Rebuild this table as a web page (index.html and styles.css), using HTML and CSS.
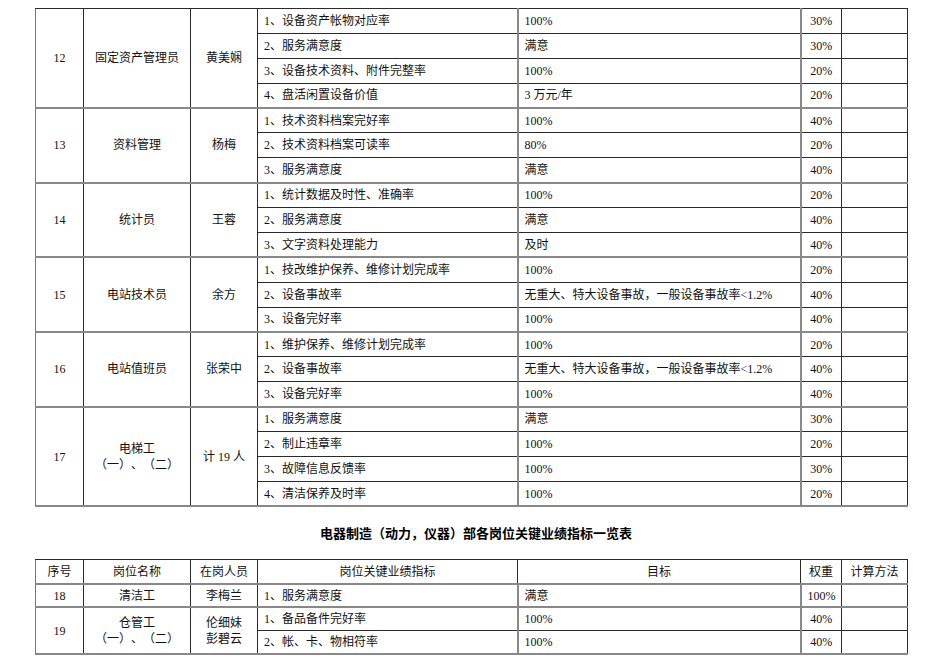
FILE: index.html
```html
<!DOCTYPE html>
<html lang="zh-CN">
<head>
<meta charset="utf-8">
<title>岗位关键业绩指标一览表</title>
<link rel="stylesheet" href="styles.css">
</head>
<body>
<div class="page">
  <table class="kpi kpi-main">
    <colgroup>
      <col class="c-no"><col class="c-post"><col class="c-staff"><col class="c-kpi"><col class="c-goal"><col class="c-weight"><col class="c-calc">
    </colgroup>
    <tbody class="grp">
      <tr><td rowspan="4" class="ctr">12</td><td rowspan="4" class="ctr">固定资产管理员</td><td rowspan="4" class="ctr">黄美娴</td><td class="kpi-t">1、设备资产帐物对应率</td><td class="goal">100%</td><td class="ctr w">30%</td><td></td></tr>
      <tr><td class="kpi-t">2、服务满意度</td><td class="goal">满意</td><td class="ctr w">30%</td><td></td></tr>
      <tr><td class="kpi-t">3、设备技术资料、附件完整率</td><td class="goal">100%</td><td class="ctr w">20%</td><td></td></tr>
      <tr class="last"><td class="kpi-t">4、盘活闲置设备价值</td><td class="goal">3 万元/年</td><td class="ctr w">20%</td><td></td></tr>
    </tbody>
    <tbody class="grp">
      <tr><td rowspan="3" class="ctr">13</td><td rowspan="3" class="ctr">资料管理</td><td rowspan="3" class="ctr">杨梅</td><td class="kpi-t">1、技术资料档案完好率</td><td class="goal">100%</td><td class="ctr w">40%</td><td></td></tr>
      <tr><td class="kpi-t">2、技术资料档案可读率</td><td class="goal">80%</td><td class="ctr w">20%</td><td></td></tr>
      <tr class="last"><td class="kpi-t">3、服务满意度</td><td class="goal">满意</td><td class="ctr w">40%</td><td></td></tr>
    </tbody>
    <tbody class="grp">
      <tr><td rowspan="3" class="ctr">14</td><td rowspan="3" class="ctr">统计员</td><td rowspan="3" class="ctr">王蓉</td><td class="kpi-t">1、统计数据及时性、准确率</td><td class="goal">100%</td><td class="ctr w">20%</td><td></td></tr>
      <tr><td class="kpi-t">2、服务满意度</td><td class="goal">满意</td><td class="ctr w">40%</td><td></td></tr>
      <tr class="last"><td class="kpi-t">3、文字资料处理能力</td><td class="goal">及时</td><td class="ctr w">40%</td><td></td></tr>
    </tbody>
    <tbody class="grp">
      <tr><td rowspan="3" class="ctr">15</td><td rowspan="3" class="ctr">电站技术员</td><td rowspan="3" class="ctr">余方</td><td class="kpi-t">1、技改维护保养、维修计划完成率</td><td class="goal">100%</td><td class="ctr w">20%</td><td></td></tr>
      <tr><td class="kpi-t">2、设备事故率</td><td class="goal">无重大、特大设备事故，一般设备事故率&lt;1.2%</td><td class="ctr w">40%</td><td></td></tr>
      <tr class="last"><td class="kpi-t">3、设备完好率</td><td class="goal">100%</td><td class="ctr w">40%</td><td></td></tr>
    </tbody>
    <tbody class="grp">
      <tr><td rowspan="3" class="ctr">16</td><td rowspan="3" class="ctr">电站值班员</td><td rowspan="3" class="ctr">张荣中</td><td class="kpi-t">1、维护保养、维修计划完成率</td><td class="goal">100%</td><td class="ctr w">20%</td><td></td></tr>
      <tr><td class="kpi-t">2、设备事故率</td><td class="goal">无重大、特大设备事故，一般设备事故率&lt;1.2%</td><td class="ctr w">40%</td><td></td></tr>
      <tr class="last"><td class="kpi-t">3、设备完好率</td><td class="goal">100%</td><td class="ctr w">40%</td><td></td></tr>
    </tbody>
    <tbody class="grp">
      <tr><td rowspan="4" class="ctr">17</td><td rowspan="4" class="ctr multi">电梯工<br>（一）、（二）</td><td rowspan="4" class="ctr">计 19 人</td><td class="kpi-t">1、服务满意度</td><td class="goal">满意</td><td class="ctr w">30%</td><td></td></tr>
      <tr><td class="kpi-t">2、制止违章率</td><td class="goal">100%</td><td class="ctr w">20%</td><td></td></tr>
      <tr><td class="kpi-t">3、故障信息反馈率</td><td class="goal">100%</td><td class="ctr w">30%</td><td></td></tr>
      <tr class="last"><td class="kpi-t">4、清洁保养及时率</td><td class="goal">100%</td><td class="ctr w">20%</td><td></td></tr>
    </tbody>
  </table>

  <h2 class="title">电器制造（动力，仪器）部各岗位关键业绩指标一览表</h2>

  <table class="kpi kpi-second">
    <colgroup>
      <col class="c-no"><col class="c-post"><col class="c-staff"><col class="c-kpi"><col class="c-goal"><col class="c-weight"><col class="c-calc">
    </colgroup>
    <thead>
      <tr class="head"><th>序号</th><th>岗位名称</th><th>在岗人员</th><th>岗位关键业绩指标</th><th>目标</th><th>权重</th><th>计算方法</th></tr>
    </thead>
    <tbody class="grp">
      <tr class="last"><td class="ctr">18</td><td class="ctr">清洁工</td><td class="ctr">李梅兰</td><td class="kpi-t">1、服务满意度</td><td class="goal">满意</td><td class="ctr w">100%</td><td></td></tr>
    </tbody>
    <tbody class="grp">
      <tr><td rowspan="2" class="ctr">19</td><td rowspan="2" class="ctr multi">仓管工<br>（一）、（二）</td><td rowspan="2" class="ctr multi">伦细妹<br>彭碧云</td><td class="kpi-t">1、备品备件完好率</td><td class="goal">100%</td><td class="ctr w">40%</td><td></td></tr>
      <tr class="last"><td class="kpi-t">2、帐、卡、物相符率</td><td class="goal">100%</td><td class="ctr w">40%</td><td></td></tr>
    </tbody>
  </table>
</div>
</body>
</html>
```

FILE: styles.css
```css
html, body {
  margin: 0;
  padding: 0;
  background: #ffffff;
}

body {
  font-family: "Liberation Serif", "Noto Sans CJK SC", serif;
  font-size: 12px;
  color: #111;
  text-spacing-trim: space-all;
  font-feature-settings: "halt" 0, "chws" 0;
}

.page {
  padding: 8px 0 0 35px;
  width: 871px;
}

.kpi {
  border-collapse: collapse;
  table-layout: fixed;
  width: 872px;
}

.c-no { width: 48px; }
.c-post { width: 107px; }
.c-staff { width: 67px; }
.c-kpi { width: 260px; }
.c-goal { width: 283px; }
.c-weight { width: 41px; }
.c-calc { width: 66px; }

.kpi td,
.kpi th {
  border: 1px solid #2a2a2a;
  padding: 0 6px;
  line-height: 16px;
  vertical-align: middle;
  white-space: nowrap;
  font-weight: normal;
}

.kpi-main tr { height: 24.9px; }

.kpi td:nth-child(1),
.kpi th:nth-child(1) { border-left-color: #777; }

.kpi td.goal { border-left: 2px solid #888; }
.kpi td.w { border-left: 2px solid #888; }

.kpi tbody.grp tr.last td,
.kpi tbody.grp tr:first-child td[rowspan] {
  border-bottom: 2px solid #888;
}

.ctr { text-align: center; }

.kpi-t { text-align: left; padding-left: 6px; }
.goal { text-align: left; }

.multi { line-height: 17px; }

.title {
  margin: 0;
  height: 52px;
  line-height: 52px;
  text-align: center;
  font-family: "Noto Sans CJK SC", "Liberation Sans", sans-serif;
  font-weight: bold;
  font-size: 13px;
  color: #000;
  width: 882px;
}

.kpi-second .head { height: 24px; }
.kpi-second .head th { border-bottom: 2px solid #888; }
.kpi-second tr { height: 23.5px; }
.kpi-second th { text-align: center; }
```
